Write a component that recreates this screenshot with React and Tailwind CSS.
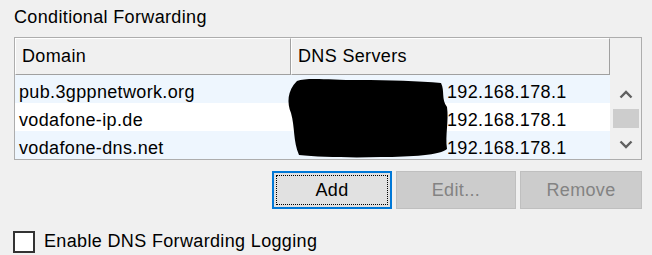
import React from 'react';

const rows = [
  { domain: 'pub.3gppnetwork.org', dns: '192.168.178.1', shade: true },
  { domain: 'vodafone-ip.de', dns: '192.168.178.1', shade: false },
  { domain: 'vodafone-dns.net', dns: '192.168.178.1', shade: true },
];

function Chevron({ up }) {
  return (
    <svg width="14" height="9" viewBox="0 0 14 9">
      <path
        d={up ? 'M1.5 7.5 L7 2 L12.5 7.5' : 'M1.5 1.5 L7 7 L12.5 1.5'}
        fill="none"
        stroke="#606060"
        strokeWidth="2.4"
      />
    </svg>
  );
}

export default function App() {
  return (
    <div
      className="w-[652px] h-[255px] bg-[#f0f0f0] text-[18px] tracking-[0.35px] text-black overflow-hidden"
      style={{ fontFamily: '"Liberation Sans", Arial, sans-serif' }}
    >
      <div className="pt-[6px] pl-[14px] leading-[22px]">Conditional Forwarding</div>

      {/* list view */}
      <div className="relative ml-[14px] mt-[9px] w-[628px] h-[123px] border border-[#adadad] bg-white flex">
        <div className="flex-1 flex flex-col">
          <div className="flex h-[37px] bg-[#f0f0f0]">
            <div className="w-[276px] border-t border-l border-white border-r border-b border-r-[#a0a0a0] border-b-[#a0a0a0] flex items-center pl-[6px]">
              Domain
            </div>
            <div className="w-[319px] border-t border-l border-white border-r border-b border-r-[#a0a0a0] border-b-[#a0a0a0] flex items-center pl-[6px]">
              DNS Servers
            </div>
          </div>
          <div className="flex-1 flex flex-col">
            {rows.map((r) => (
              <div
                key={r.domain}
                className={`flex h-[28px] items-center ${r.shade ? 'bg-[#eef6fe]' : 'bg-white'}`}
              >
                <div className="w-[276px] pl-[4px] pt-[7px]">{r.domain}</div>
                <div className="pl-[156px] pt-[7px]">{r.dns}</div>
              </div>
            ))}
          </div>
        </div>

        {/* scrollbar */}
        <div className="w-[32px] bg-[#f0f0f0] flex flex-col items-center">
          <div className="h-[48px]" />
          <div className="h-[16px] flex items-center justify-center">
            <Chevron up />
          </div>
          <div className="mt-[7px] w-[26px] h-[19px] bg-[#cdcdcd]" />
          <div className="mt-[8px] h-[16px] flex items-center justify-center">
            <Chevron />
          </div>
        </div>

        {/* redaction scribble */}
        <svg className="absolute left-[270px] top-[39px]" width="166" height="82" viewBox="0 0 166 82">
          <path
            d="M12 4 C22 0 44 3 74 3 C104 3 134 4 156 6 C160 14 156 22 162 30 C164 44 160 58 162 72 C156 78 126 80 96 80 C66 81 34 80 14 78 C8 64 10 50 6 36 C2 26 2 14 12 4 Z"
            fill="#000"
          />
        </svg>
      </div>

      {/* buttons */}
      <div className="flex gap-[4px] ml-[272px] mt-[11px]">
        <button className="w-[120px] h-[38px] border-2 border-[#0078d7] bg-[#e1e1e1] p-[2px]">
          <div className="w-full h-full border border-dotted border-black flex items-center justify-center">
            Add
          </div>
        </button>
        <button className="w-[120px] h-[38px] border border-[#bfbfbf] bg-[#cccccc] text-[#838383] flex items-center justify-center">
          Edit...
        </button>
        <button className="w-[122px] h-[38px] border border-[#bfbfbf] bg-[#cccccc] text-[#838383] flex items-center justify-center">
          Remove
        </button>
      </div>

      {/* checkbox */}
      <label className="flex items-center ml-[13px] mt-[19px] gap-[9px]">
        <span className="w-[22px] h-[22px] border-2 border-[#333333] bg-white" />
        <span>Enable DNS Forwarding Logging</span>
      </label>
    </div>
  );
}
